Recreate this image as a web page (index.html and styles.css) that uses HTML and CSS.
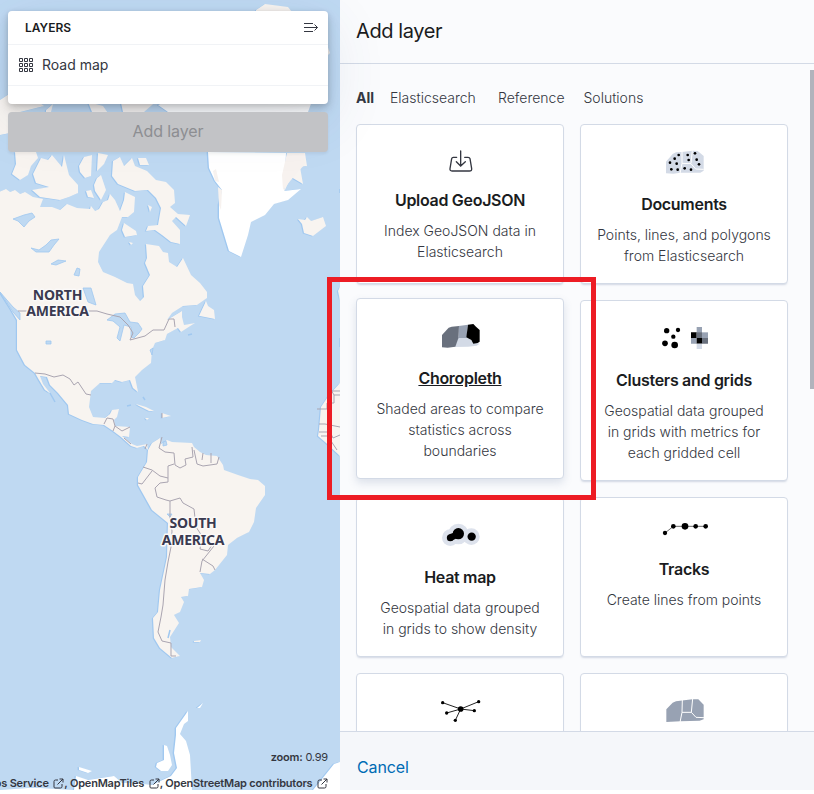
FILE: index.html
```html
<!DOCTYPE html>
<html lang="en">
<head>
<meta charset="utf-8">
<title>Maps</title>
<link rel="stylesheet" href="styles.css">
</head>
<body>
<div class="app">
  <main class="map">
    <svg class="map-canvas" width="340" height="790" viewBox="0 0 340 790">
      <rect width="340" height="790" fill="#bfd9f2"/>
      <defs>
        <g id="land">
          <path d="M0 191.5 6 189 10 192 15 190 20 194 25 192 33 197 43 199 40 207 52 207 60 210 67 204 77 208 90 209 91 206 95 211 99 209 103 202 108 200 110 194 115 200 120 211 124 200 125 192 135 197 134 212 128 217 122 217 117 230 110 235 99 252 98 262 103 272 115 277 127 283 133 284 135 295 140 301 144 297 143 286 150 275 145 263 147 258 146 244 159 246 163 252 168 253 169 262 177 267 183 258 191 275 200 283 207 292 207 298 197 305 183 306 172 313 167 320 182 311 182 317 184 325 195 323 181 332 178 328 167 334 165 340 155 343 152 350 151 363 142 370 135 377 138 392 133 388 130 380 122 382 115 380 112 383 100 383 91 391 89 407 93 417 105 418 110 414 112 410 119 409 117 417 114 420 115 426 130 427 129 437 122 436 132 444 137 446 147 444 148 450 144 446 137 448 131 446 121 437 113 431 104 425 93 424 82 420 69 414 68 405 58 393 50 385 47 377 40 376 43 384 50 393 45 390 39 380 35 373 25 365 17 350 17 320 10 308 0 292Z"/>
          <path d="M148 450 152 443 160 438 161 444 167 440 172 442 192 443 194 447 200 452 206 455 217 456 223 465 224 470 238 475 250 479 258 480 265 486 265 495 256 508 254 522 249 532 237 538 228 545 227 555 215 570 210 574 200 573 204 580 202 587 189 589 188 596 181 597 184 602 180 612 174 615 179 623 170 637 171 647 180 656 172 658 160 648 154 638 153 618 158 612 160 590 167 557 168 523 152 510 138 485 138 477 147 462Z"/>
          <path d="M15 152H36L38 158 31 166 28 175 20 180 12 174 16 164Z M41 158 48 160 52 155 62 167 64 155 69 175 78 185 78 193 69 197 60 200 40 197 32 190 49 187 36 183 33 174Z M79 166 84 157 92 155 91 176 85 178 80 172Z M98 153 108 155 104 164 97 171Z M97 178 101 175 106 190 101 200 95 191 94 185Z M86 191 91 190 94 198 88 197Z M113 161 120 157 124 166 132 158 135 166 147 171 156 180 166 182 174 190 175 203 170 207 178 214 190 215 186 226 176 217 172 221 180 230 180 244 171 242 162 235 155 230 146 231 148 226 158 225 161 208 156 198 148 190 135 191 118 184 112 176Z M138 158H146L149 165 140 165Z M148 205 152 207 150 212Z M124 223 136 231 137 235 125 237 122 230Z M129 242 133 243 131 245Z M199 316 206 301 208 306 214 310 215 319 200 316Z"/>
          <path d="M0 100 12 92 30 96 44 106 20 112 25 130 0 135Z M46 110 53 104 50 116 46 114Z M88 102 103 106 112 119 92 112Z M120 98H160L144 112H123Z M256 10 265 4 288 7 292 12H256Z M327 45 330 53 325 58Z"/>
          <path d="M298 219 305 220 307 217 311 221 323 217 326 226 313 236 304 233 302 224Z M287 153H305L307 166 300 167 303 184 291 177 284 192Z"/>
          <path d="M136 404 146 407 154 411 149 411 139 406Z M162 413 171 416 162 418Z M145 418H149L147 420Z M194 641 201 640 200 642 194 642Z"/>
          <path d="M340 359 340 383 329 395 321 407 319 430 318 436 325 442 340 456Z M338 291 340 287 340 300Z"/>
        </g>
        <g id="ice">
          <path d="M208 152 209 168 215 181 222 190 219 205 219 218 229 251 241 257 248 235 251 222 265 215 274 204 288 200 301 189 284 191 286 153Z M158 105 165 102 312 101 308 112H168Z"/>
          <path d="M164 745 167 746 170 755 172 765 168 771 161 771 156 767 157 763 164 760Z M203 703 200 708 197 708Z M188 711 188 721 184 724 180 734 186 741 190 755 192 790H0L28 788 40 788 74 790 76 776 88 780 114 776 122 783 136 783 152 785 171 776 177 768 174 753 176 735 176 728Z M79 767 92 771 88 773 79 770Z M340 762 334 764 326 774 313 790H340Z"/>
        </g>
      </defs>
      <use href="#land" class="coast" x="-1.2" y=".5"/>
      <use href="#ice" class="coast" x="-1.4"/>
      <use href="#land" fill="#f8f4f0"/>
      <use href="#ice" fill="#fff"/>
      <path fill="#f7f2ef" d="M287 153 304 153 305 164 291 180 283 190 282 175Z M218 187 222 190 221 210 219 205Z M213 171 216 169 219 182 215 181Z"/>
      <g class="lake">
        <path d="M13 219 24 215 32 213 35 217 29 221 24 227 18 221Z M31 248 39 250 46 245 51 240 59 239 54 245 49 252 36 252Z M51 264 58 260 66 261 56 265Z M77 268 80 269 79 276 74 275Z M83 288 91 288 96 305 88 302Z M107 320 115 314 125 313 130 322 138 323 142 329 139 333 134 338 131 337 131 327 124 325 120 341 117 338 120 327 113 321Z M46 341H51V344H46Z M150 350 153 348 152 355Z M163 442 166 441 167 445 163 446Z M167 514 172 514 170 517Z M0 292 13 307 20 313 20 320 13 312Z"/>
      </g>
      <g class="islands">
        <path d="M50 393l5 9M127 406l4-1M143 397l2 3M188 335l4-1M170 630l-2 8M340 338v9M340 189v4"/>
      </g>
      <g class="borders">
        <path d="M18 311H29M88 311H97L107 314 120 317 128 325 133 333 130 340 145 336 153 330 164 330 169 319 174 319 175 327"/>
        <path d="M35 373 45 374 54 377 63 375 70 379 74 385 78 382 82 388 86 394 91 395M104 424 107 418 113 419 115 426 113 431M115 426 122 431 130 427M124 438 131 444M147 444 145 449"/>
        <path d="M162 437 159 448 165 452 174 453 175 465 180 468 186 465 185 459 193 457 192 447M194 450 197 464 203 466 217 464 219 457M203 453 202 460M211 453 211 463M174 464 168 466 168 482 160 483 155 488 157 497 166 500 170 501 180 498 183 503 194 509 196 527 202 536 200 549 208 551 212 545M143 467 152 470 160 476 168 478M138 483 142 484 152 471M170 501 170 518 172 531 171 547 168 562 165 580 163 605 161 617 158 632 162 641 171 643V656H176M170 526 182 528 190 526M214 546 202 561 200 572M202 559 213 566 215 570"/>
        <path d="M317 409H327V403H334V395H340M334 395 330 388M319 424H325L340 427M319 432H330L333 438 340 435M321 436H327M331 441 337 450M340 391H332M162 413V418"/>
      </g>
      <g class="continent" text-anchor="middle">
        <text x="57.5" y="299.500">NORTH</text><text x="57.5" y="316">AMERICA</text>
        <text x="193" y="528">SOUTH</text><text x="193" y="544.500">AMERICA</text>
      </g>
    </svg>
    <div class="map-info">
      <div class="zoom"><b>zoom:</b> 0.99</div>
      <div class="credits">Elastic Maps Service <svg class="ext" viewBox="0 0 11 11"><path d="M5 2H2.5Q1 2 1 3.500V9Q1 10 2 10H7.500Q9 10 9 8.500V6M6.500 1H10V4.500M10 1 4.500 6.500"/></svg>, OpenMapTiles <svg class="ext" viewBox="0 0 11 11"><path d="M5 2H2.500Q1 2 1 3.500V9Q1 10 2 10H7.500Q9 10 9 8.500V6M6.500 1H10V4.500M10 1 4.500 6.500"/></svg>, OpenStreetMap contributors <svg class="ext" viewBox="0 0 11 11"><path d="M5 2H2.500Q1 2 1 3.500V9Q1 10 2 10H7.500Q9 10 9 8.500V6M6.500 1H10V4.500M10 1 4.500 6.500"/></svg></div>
    </div>
    <div class="map-controls">
      <section class="layers">
        <header class="layers-head"><h2>LAYERS</h2>
          <svg width="16" height="12" viewBox="0 0 16 12"><path d="M1 1.500H10M1 5.500H14.500M1 9.500H10M11.500 2.500 14.500 5.500 11.500 8.500"/></svg>
        </header>
        <div class="layer-row">
          <svg width="14" height="14" viewBox="0 0 14 14"><path d="M.5.500h3v3h-3zM5.500.500h3v3h-3zM10.500.500h3v3h-3zM.5 5.500h3v3h-3zM5.500 5.500h3v3h-3zM10.500 5.500h3v3h-3zM.5 10.500h3v3h-3zM5.500 10.500h3v3h-3zM10.500 10.500h3v3h-3z"/></svg>
          <span>Road map</span>
        </div>
      </section>
      <button class="add-layer" disabled>Add layer</button>
    </div>
  </main>

  <aside class="flyout">
    <header class="flyout-head"><h1>Add layer</h1></header>
    <div class="flyout-body">
      <nav class="tabs"><span class="tab tab-all">All</span><span class="tab tab-es">Elasticsearch</span><span class="tab tab-ref">Reference</span><span class="tab">Solutions</span></nav>
      <div class="cards">
        <article class="card">
          <div class="icon icon-mid"><svg viewBox="258 63 144 108"><path class="upload" d="M320 112H310Q306 112 305 116L300 146Q299 153 306 153H358Q366 153 365 146L360 116Q359 112 354 112H344M332 93V137M319 125 332 138 346 125"/></svg></div>
          <h3>Upload GeoJSON</h3><p>Index GeoJSON data in Elasticsearch</p>
        </article>
        <article class="card">
          <div class="icon"><svg viewBox="255 63 144 108"><path fill="#d3dae6" d="M273 125 293 102 303 97 320 96 352 92 368 93 386 108V152L376 158 316 158 295 161 273 160Z"/><path class="seams" d="M321 94 321 130 315 161M352 91 348 130M321 130 348 131 362 147 386 148"/><g><circle cx="311" cy="105" r="4"/><circle cx="299" cy="116" r="4"/><circle cx="285" cy="128" r="4"/><circle cx="305" cy="131" r="4"/><circle cx="289" cy="148" r="4"/><circle cx="308" cy="149" r="4"/><circle cx="338" cy="105" r="4"/><circle cx="360" cy="100" r="4"/><circle cx="341" cy="120" r="4"/><circle cx="365" cy="119" r="4"/><circle cx="372" cy="133" r="4"/><circle cx="329" cy="145" r="4"/><circle cx="348" cy="149" r="4"/></g></svg></div>
          <h3>Documents</h3><p>Points, lines, and polygons from Elasticsearch</p>
        </article>
        <article class="card card-hover">
          <div class="icon"><svg viewBox="333 120 144 108"><path fill="#d3dae6" d="M398 186 428 186 445 202 464 206 455 212 430 215 390 216Z"/><path fill="#98a2b3" d="M401 153 429 149 425 189 400 189Z"/><path fill="#69707d" d="M351 180 371 158 380 155 402 153 400 190 391 215 368 218 351 217Z"/><path d="M429 149 445 147 453 155 464 165V200L458 204 445 206 439 195 424 187Z"/></svg></div>
          <h3>Choropleth</h3><p>Shaded areas to compare statistics across boundaries</p>
        </article>
        <article class="card">
          <div class="icon"><svg viewBox="255 66 144 108" overflow="visible"><circle cx="275" cy="107" r="8"/><circle cx="309" cy="105" r="6.500"/><circle cx="295" cy="125" r="6.500"/><circle cx="270" cy="145" r="8.500"/><circle cx="299" cy="150" r="10"/><path fill="#98a2b3" d="M365 96h16v17h-16zM348 129h17v17h-17z"/><path d="M348 112h17v17h-17zM365 129h16v17h-16z"/><path fill="#69707d" d="M365 112h16v17h-16zM381 129h18v17h-18z"/><path fill="#98a2b3" d="M381 112h18v17h-18z"/><path fill="#d3dae6" d="M365 146h16v16h-16z"/></svg></div>
          <h3>Clusters and grids</h3><p>Geospatial data grouped in grids with metrics for each gridded cell</p>
        </article>
        <article class="card">
          <div class="icon"><svg viewBox="258 72 144 108"><g fill="#dde2ec"><circle cx="301" cy="143" r="25"/><circle cx="325" cy="132" r="31"/><circle cx="364" cy="140" r="25"/></g><circle cx="301" cy="143" r="10.500"/><circle cx="325" cy="131" r="17"/><circle cx="365" cy="140" r="12.500"/><path d="M298 133 311 128 318 146 304 152Z"/></svg></div>
          <h3>Heat map</h3><p>Geospatial data grouped in grids to show density</p>
        </article>
        <article class="card">
          <div class="icon icon-short"><svg viewBox="255 72 144 108" overflow="visible"><path class="thin" d="M270 129 295 109H392"/><circle cx="270" cy="129" r="6.500"/><circle cx="295" cy="109" r="7"/><circle cx="330" cy="109" r="10"/><circle cx="362" cy="109" r="7"/><circle cx="392" cy="109" r="7"/></svg></div>
          <h3>Tracks</h3><p>Create lines from points</p>
        </article>
        <article class="card">
          <div class="icon"><svg viewBox="258 600 144 108"><path class="thin thick" d="M278 638 332 657 386 635M290 669 332 657 373 662M332 657 316 691"/><circle cx="332" cy="657" r="8.500"/><circle cx="278" cy="638" r="5"/><circle cx="386" cy="635" r="5"/><circle cx="290" cy="669" r="5"/><circle cx="373" cy="662" r="5"/><circle cx="316" cy="691" r="5"/></svg></div>
        </article>
        <article class="card">
          <div class="icon"><svg viewBox="255 600 144 108"><path fill="#98a2b3" d="M274 658 293 638 303 634 352 628 370 628 386 644V688L374 692 316 694 274 696Z"/><path class="seams" d="M322 630 321 667 315 697M353 626 349 667M321 667 349 667 363 682 387 683"/></svg></div>
        </article>
      </div>
      <div class="scroll-thumb"></div>
    </div>
    <footer class="flyout-foot"><a>Cancel</a></footer>
  </aside>
  <div class="highlight"></div>
</div>
</body>
</html>
```
FILE: styles.css
```css
* { box-sizing: border-box; }
body { margin: 0; background: #fff; font-family: Inter, "Liberation Sans", sans-serif; color: #343741; overflow: hidden; }
h1, h2, h3, p { margin: 0; }
.app { position: relative; display: flex; width: 814px; height: 790px; }

.map { position: relative; z-index: 1; width: 340px; height: 790px; flex: none; }
.map-canvas { display: block; }
.coast { fill: #a0c8f0; }
.lake { fill: #bfd9f2; stroke: #a0c8f0; stroke-width: .8; }
.islands { fill: none; stroke: #a0c8f0; stroke-width: 1.5; }
.borders { fill: none; stroke: #aaa5b1; stroke-width: 1; }
.continent { font: 700 14px "Noto Sans", sans-serif; letter-spacing: -.2px; fill: #3a3a50; stroke: #fbf9f8; stroke-width: 3px; stroke-linejoin: round; paint-order: stroke; }

.map-info { position: absolute; right: 12px; bottom: 0; text-align: right; white-space: nowrap; font-size: 11px; line-height: 14px; letter-spacing: -.2px; }
.zoom { margin-bottom: 12px; }
.zoom b { font-weight: 600; }
.credits { font-weight: 600; }
.ext { width: 11px; height: 11px; margin-left: 2px; vertical-align: -2px; fill: none; stroke: #343741; stroke-width: 1; }

.map-controls { position: absolute; top: 11px; left: 8px; width: 320px; display: flex; flex-direction: column; gap: 8px; }
.layers { height: 93px; background: #fff; border-radius: 4px; box-shadow: 0 1px 4px rgba(0,0,0,.08), 0 3px 8px rgba(0,0,0,.1), 0 6px 12px rgba(0,0,0,.1), 0 15px 60px rgba(60,80,120,.12); }
.layers-head { height: 34px; padding: 0 9px 0 17px; display: flex; align-items: center; justify-content: space-between; border-bottom: 1px solid #f1f3f6; }
.layers-head h2 { font-size: 12px; font-weight: 600; color: #1a1c21; }
.layers-head svg, .layer-row svg { fill: none; stroke: #343741; }
.layer-row { height: 41px; padding: 0 10px 0 11px; display: flex; align-items: center; gap: 9px; border-bottom: 1px solid #f1f3f6; font-size: 14px; }
.layer-row span { padding-bottom: 2px; }
.add-layer { height: 40px; padding: 0 0 2px; border: 0; border-radius: 4px; background: #c2c3c6; color: #8d8e92; font: 400 16px Inter, sans-serif; letter-spacing: -.1px; box-shadow: 0 2px 3px rgba(0,0,0,.06); }

.flyout { width: 474px; height: 790px; display: flex; flex-direction: column; background: #fafbfd; }
.flyout-head { height: 64px; padding: 0 16px 2px; display: flex; align-items: center; border-bottom: 1px solid #d3dae6; }
.flyout-head h1 { font-size: 20px; font-weight: 400; color: #1a1c21; letter-spacing: -.4px; }
.flyout-body { position: relative; height: 667px; overflow: hidden; padding: 23px 26px 0 16px; }
.tabs { display: flex; height: 37px; font-size: 14px; line-height: 21px; font-weight: 300; }
.tab-all { width: 34px; font-weight: 700; }
.tab-es { width: 108px; }
.tab-ref { width: 85.5px; }
.cards { display: grid; grid-template-columns: 208px 208px; grid-template-rows: 160px 181px 160px 160px; gap: 16px; }
.card { padding: 16px; background: #fff; border: 1px solid #d3dae6; border-radius: 4px; box-shadow: 0 2px 2px -1px rgba(90,110,150,.25); text-align: center; }
.card-hover { position: relative; top: -2px; box-shadow: 0 4px 8px rgba(90,110,150,.18); }
.card-hover h3 { text-decoration: underline; }
.icon { height: 51px; }
.icon-mid { height: 47px; }
.icon-short { height: 43px; }
.icon svg { width: 48px; height: 36px; }
.card h3 { font-size: 16px; font-weight: 600; line-height: 24px; color: #1a1c21; white-space: nowrap; letter-spacing: -.3px; }
.card p { margin-top: 8px; font-size: 14px; line-height: 21px; font-weight: 300; }
.upload { fill: none; stroke: #343741; stroke-width: 4; stroke-linecap: round; }
.seams { fill: none; stroke: #fff; stroke-width: 3; }
.thin { fill: none; stroke: #222; stroke-width: 2; }
.thick { stroke-width: 3; }
.scroll-thumb { position: absolute; top: 6px; right: 0; width: 4px; height: 319px; background: #b1b3bc; }
.flyout-foot { height: 59px; padding: 12px 17px 0; flex: none; background: #f5f7fa; border-top: 1px solid #d3dae6; }
.flyout-foot a { font-size: 16px; line-height: 46px; color: #006bb4; letter-spacing: -.1px; }

.highlight { position: absolute; z-index: 2; left: 327px; top: 277px; width: 269px; height: 223px; border: 5px solid #ed1c24; }
```
